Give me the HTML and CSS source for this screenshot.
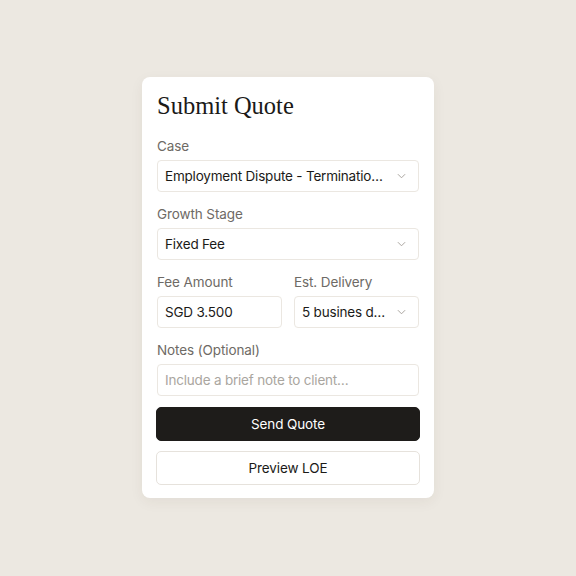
FILE: index.html
```html
<!DOCTYPE html>
<html lang="en">
<head>
  <meta charset="UTF-8">
  <title>Submit Quote</title>
  <link rel="stylesheet" href="styles.css">
</head>
<body>
  <div class="quote-card">
    <h1>Submit Quote</h1>

    <div class="field">
      <label>Case</label>
      <div class="select">
        <span>Employment Dispute - Terminatio…</span>
        <svg viewBox="0 0 10 6" width="9" height="6"><path d="M1 1l4 4 4-4" fill="none" stroke="#a09b95" stroke-width="1"/></svg>
      </div>
    </div>

    <div class="field">
      <label>Growth Stage</label>
      <div class="select">
        <span>Fixed Fee</span>
        <svg viewBox="0 0 10 6" width="9" height="6"><path d="M1 1l4 4 4-4" fill="none" stroke="#a09b95" stroke-width="1"/></svg>
      </div>
    </div>

    <div class="field-row">
      <div class="field">
        <label>Fee Amount</label>
        <div class="input">SGD 3.500</div>
      </div>
      <div class="field">
        <label>Est. Delivery</label>
        <div class="select">
          <span>5 busines d…</span>
          <svg viewBox="0 0 10 6" width="9" height="6"><path d="M1 1l4 4 4-4" fill="none" stroke="#a09b95" stroke-width="1"/></svg>
        </div>
      </div>
    </div>

    <div class="field">
      <label>Notes (Optional)</label>
      <div class="input placeholder">Include a brief note to client…</div>
    </div>

    <div class="actions">
      <button class="btn btn-primary">Send Quote</button>
      <button class="btn btn-outline">Preview LOE</button>
    </div>
  </div>
</body>
</html>
```

FILE: styles.css
```css
/* page */
body {
  margin: 0;
  width: 576px;
  height: 576px;
  background: #ece8e1;
  font-family: Inter, "Noto Sans", sans-serif;
  display: flex;
  justify-content: center;
  align-items: flex-start;
}

.quote-card {
  margin-top: 77px;
  width: 262px;
  padding: 15px 15px 13px;
  background: #fff;
  border-radius: 8px;
  box-shadow: 0 4px 14px rgba(60, 50, 40, 0.06);
}

h1 {
  margin: 0 0 16px;
  font-family: "Liberation Serif", serif;
  font-weight: 400;
  font-size: 24.5px;
  line-height: 28px;
  color: #1b1a18;
}

.field {
  display: flex;
  flex-direction: column;
  gap: 4px;
  margin-bottom: 12px;
  min-width: 0;
}

.field label {
  font-size: 13.5px;
  line-height: 20px;
  letter-spacing: -0.1px;
  color: #6e6a65;
}

.field-row {
  display: flex;
  gap: 12px;
}

.field-row .field {
  flex: 1;
}

.select,
.input {
  box-sizing: border-box;
  height: 32px;
  border: 1px solid #ebe7e1;
  border-radius: 4px;
  padding: 0 12px 0 7px;
  display: flex;
  align-items: center;
  font-size: 13.5px;
  letter-spacing: -0.2px;
  color: #1b1a18;
  white-space: nowrap;
  overflow: hidden;
}

.select span {
  flex: 1;
  overflow: hidden;
}

.select svg {
  flex: none;
}

.placeholder {
  color: #aaa6a0;
}

.actions {
  display: flex;
  flex-direction: column;
  gap: 10px;
  margin: -1px -1px 0;
}

.btn {
  height: 34px;
  border-radius: 5px;
  font-family: inherit;
  font-size: 13.5px;
  letter-spacing: -0.1px;
  cursor: pointer;
}

.btn-primary {
  background: #1e1c1a;
  color: #fff;
  border: 1px solid #1e1c1a;
}

.btn-outline {
  background: #fff;
  color: #1b1a18;
  border: 1px solid #e6e2dc;
}
```
